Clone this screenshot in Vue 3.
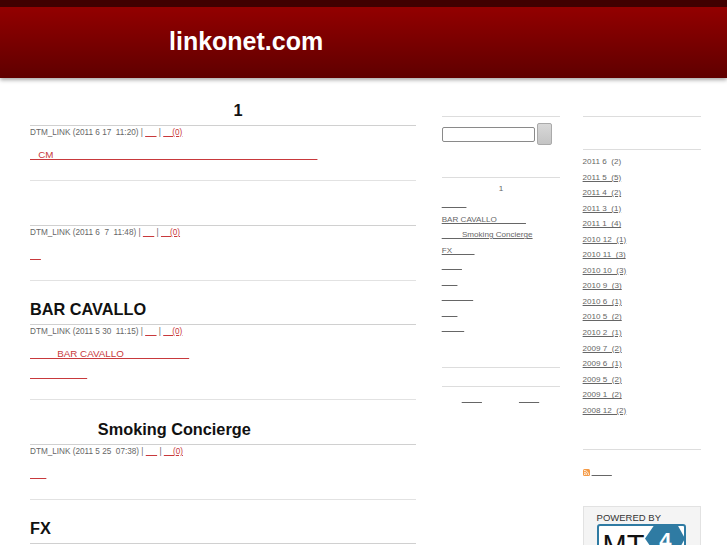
<script setup>
const gap = (n) => '\u00a0'.repeat(n)
const posts = [
  { title: gap(45) + '1', date: '(2011 6 17  11:20)', a: 5, b: '(0)', bn: 4, paras: [gap(3) + 'CM' + gap(97)] },
  { title: '\u00a0', date: '(2011 6  7  11:48)', a: 5, b: '(0)', bn: 4, paras: [gap(4)] },
  { title: 'BAR CAVALLO', date: '(2011 5 30  11:15)', a: 5, b: '(0)', bn: 4, paras: [gap(10) + 'BAR CAVALLO' + gap(24), gap(21)] },
  { title: gap(15) + 'Smoking Concierge', date: '(2011 5 25  07:38)', a: 5, b: '(0)', bn: 4, paras: [gap(6)] },
  { title: 'FX', date: '', a: 0, b: '', bn: 0, paras: [] }
]
const cats = [
  gap(11),
  'BAR CAVALLO' + gap(13),
  gap(9) + 'Smoking Concierge',
  'FX' + gap(10),
  gap(9),
  gap(7),
  gap(14),
  gap(7),
  gap(10)
]
const months = [
  '2011 6  (2)', '2011 5  (5)', '2011 4  (2)', '2011 3  (1)', '2011 1  (4)',
  '2010 12  (1)', '2010 11  (3)', '2010 10  (3)', '2010 9  (3)', '2010 6  (1)',
  '2010 5  (2)', '2010 2  (1)', '2009 7  (2)', '2009 6  (1)', '2009 5  (2)',
  '2009 1  (2)', '2008 12  (2)'
]
</script>

<template>
  <div class="page">
    <header class="banner">
      <h1 class="site">linkonet.com</h1>
    </header>
    <div class="columns">
      <main class="main">
        <article v-for="(p, i) in posts" :key="i" class="post">
          <h2 class="title">{{ p.title }}</h2>
          <template v-if="p.date">
            <div class="meta">DTM_LINK {{ p.date }} | <a class="red">{{ gap(p.a) }}</a> | <a class="red">{{ gap(p.bn) + p.b }}</a></div>
            <p v-for="(t, j) in p.paras" :key="j" class="para"><a class="red">{{ t }}</a></p>
          </template>
        </article>
      </main>
      <aside class="side one">
        <div class="search">
          <input class="box" type="text" />
          <button class="go" type="button"></button>
        </div>
        <div class="cat-head">1</div>
        <ul class="links">
          <li v-for="(c, i) in cats" :key="i"><a class="gray">{{ c }}</a></li>
        </ul>
        <div class="rule-a"></div>
        <div class="pager"><a class="gray">{{ gap(9) }}</a><a class="gray">{{ gap(9) }}</a></div>
      </aside>
      <aside class="side two">
        <div class="arch-head"></div>
        <ul class="links">
          <li v-for="(m, i) in months" :key="i">
            <span v-if="i === 0" class="plain">{{ m }}</span>
            <a v-else class="gray">{{ m }}</a>
          </li>
        </ul>
        <div class="feed">
          <svg class="rss" width="7" height="7" viewBox="0 0 7 7">
            <rect width="7" height="7" rx="1.5" fill="#f59a45" />
            <circle cx="1.8" cy="5.2" r="0.8" fill="#fff" />
            <path d="M1 3.2a2.8 2.8 0 0 1 2.8 2.8M1 1.4a4.6 4.6 0 0 1 4.6 4.6" fill="none" stroke="#fff" stroke-width="0.8" />
          </svg>
          <a class="gray">{{ gap(9) }}</a>
        </div>
        <div class="badge">
          <div class="powered">POWERED BY</div>
          <div class="mt">
            <span class="mt-text">MT</span>
            <svg class="hex" width="42" height="29" viewBox="0 0 42 29">
              <path d="M11 0H33L41 14.5L33 29H11L1 14.5Z" fill="#2f7ba3" />
            </svg>
            <span class="four">4</span>
          </div>
        </div>
      </aside>
    </div>
  </div>
</template>

<style>
html, body { margin: 0; overflow: hidden; background: #fff; }
</style>

<style scoped>
.page {
  height: 545px;
  overflow: hidden;
  font-family: "Liberation Sans", Arial, sans-serif;
  font-size: 8.2px;
  color: #666;
  white-space: pre;
}
.banner {
  height: 71px;
  border-top: 7px solid #400000;
  background: linear-gradient(#930000, #5f0000);
  box-shadow: 0 2px 4px rgba(0, 0, 0, 0.35);
  padding-left: 169px;
  display: flex;
  align-items: center;
}
.site {
  margin: 0 0 2px;
  font-size: 25px;
  line-height: 29px;
  font-weight: 700;
  color: #fff;
}
.columns {
  display: flex;
  padding: 0 26px 0 30px;
}
.main { width: 386px; margin-right: 26px; padding-top: 20px; }
.post { height: 99px; border-bottom: 1px solid #e2e2e2; }
.post:first-child { height: 82px; }
.post:nth-child(3) { height: 118px; }
.title {
  margin: 0;
  padding: 17px 0 3px;
  font-size: 16.3px;
  line-height: 24px;
  font-weight: 700;
  color: #111;
  border-bottom: 1px solid #d0d0d0;
}
.post:nth-child(odd) .title { padding-top: 16px; }
.post:first-child .title { padding-top: 0; }
.meta { line-height: 12px; margin: 1px 0 9px; }
.para { margin: 0 0 6px; font-size: 9.8px; line-height: 14px; }
.red { color: #c8393c; text-decoration: underline; }
.gray { color: #666; text-decoration: underline; }
.plain { color: #666; }
.side { width: 118.5px; padding-top: 38px; font-size: 8.1px; }
.one { margin-right: 22.5px; }
.search {
  display: flex;
  align-items: center;
  gap: 2px;
  height: 22px;
  padding-top: 6px;
  border-top: 1px solid #ddd;
}
.box {
  box-sizing: border-box;
  width: 93px;
  height: 15px;
  margin: 0;
  padding: 0;
  border: 1px solid #8a8a8a;
  border-radius: 2px;
  background: #fff;
}
.go {
  width: 15px;
  height: 22px;
  margin: 0;
  padding: 0;
  border: 1px solid #aaa;
  border-radius: 2px;
  background: linear-gradient(#d8d8d8, #c4c4c4);
}
.cat-head {
  margin-top: 32px;
  padding-top: 4px;
  border-top: 1px solid #ddd;
  text-align: center;
  line-height: 13px;
}
.links { list-style: none; margin: 0; padding: 0; }
.links li { line-height: 15.55px; }
.one .links { margin-top: 1px; }
.rule-a { height: 18px; margin-top: 31px; border-top: 1px solid #ddd; border-bottom: 1px solid #ddd; }
.pager {
  display: flex;
  gap: 37px;
  padding: 4px 0 0 20px;
  line-height: 15px;
}
.arch-head { height: 32px; border-top: 1px solid #ddd; border-bottom: 1px solid #ddd; margin-bottom: 4px; }
.feed {
  display: flex;
  align-items: center;
  gap: 2px;
  margin-top: 31px;
  padding-top: 15px;
  border-top: 1px solid #ddd;
  line-height: 14px;
}
.badge {
  box-sizing: border-box;
  height: 60px;
  margin-top: 27px;
  padding: 5px 0 0 13px;
  background: #f4f4f4;
  border: 1px solid #e2e2e2;
}
.powered { font-size: 9.5px; line-height: 11px; color: #333; }
.mt {
  position: relative;
  width: 89px;
  height: 33px;
  margin-top: 1px;
  box-sizing: border-box;
  border: 2px solid #2f7ba3;
  border-radius: 3px;
  background: #fff;
  color: #111;
}
.mt-text {
  position: absolute;
  left: 4px;
  top: 2px;
  font-size: 29px;
  line-height: 34px;
}
.hex { position: absolute; right: -2px; top: -2px; }
.four {
  position: absolute;
  right: 12px;
  top: 2px;
  color: #fff;
  font-size: 22px;
  font-weight: 700;
  line-height: 26px;
}
</style>
